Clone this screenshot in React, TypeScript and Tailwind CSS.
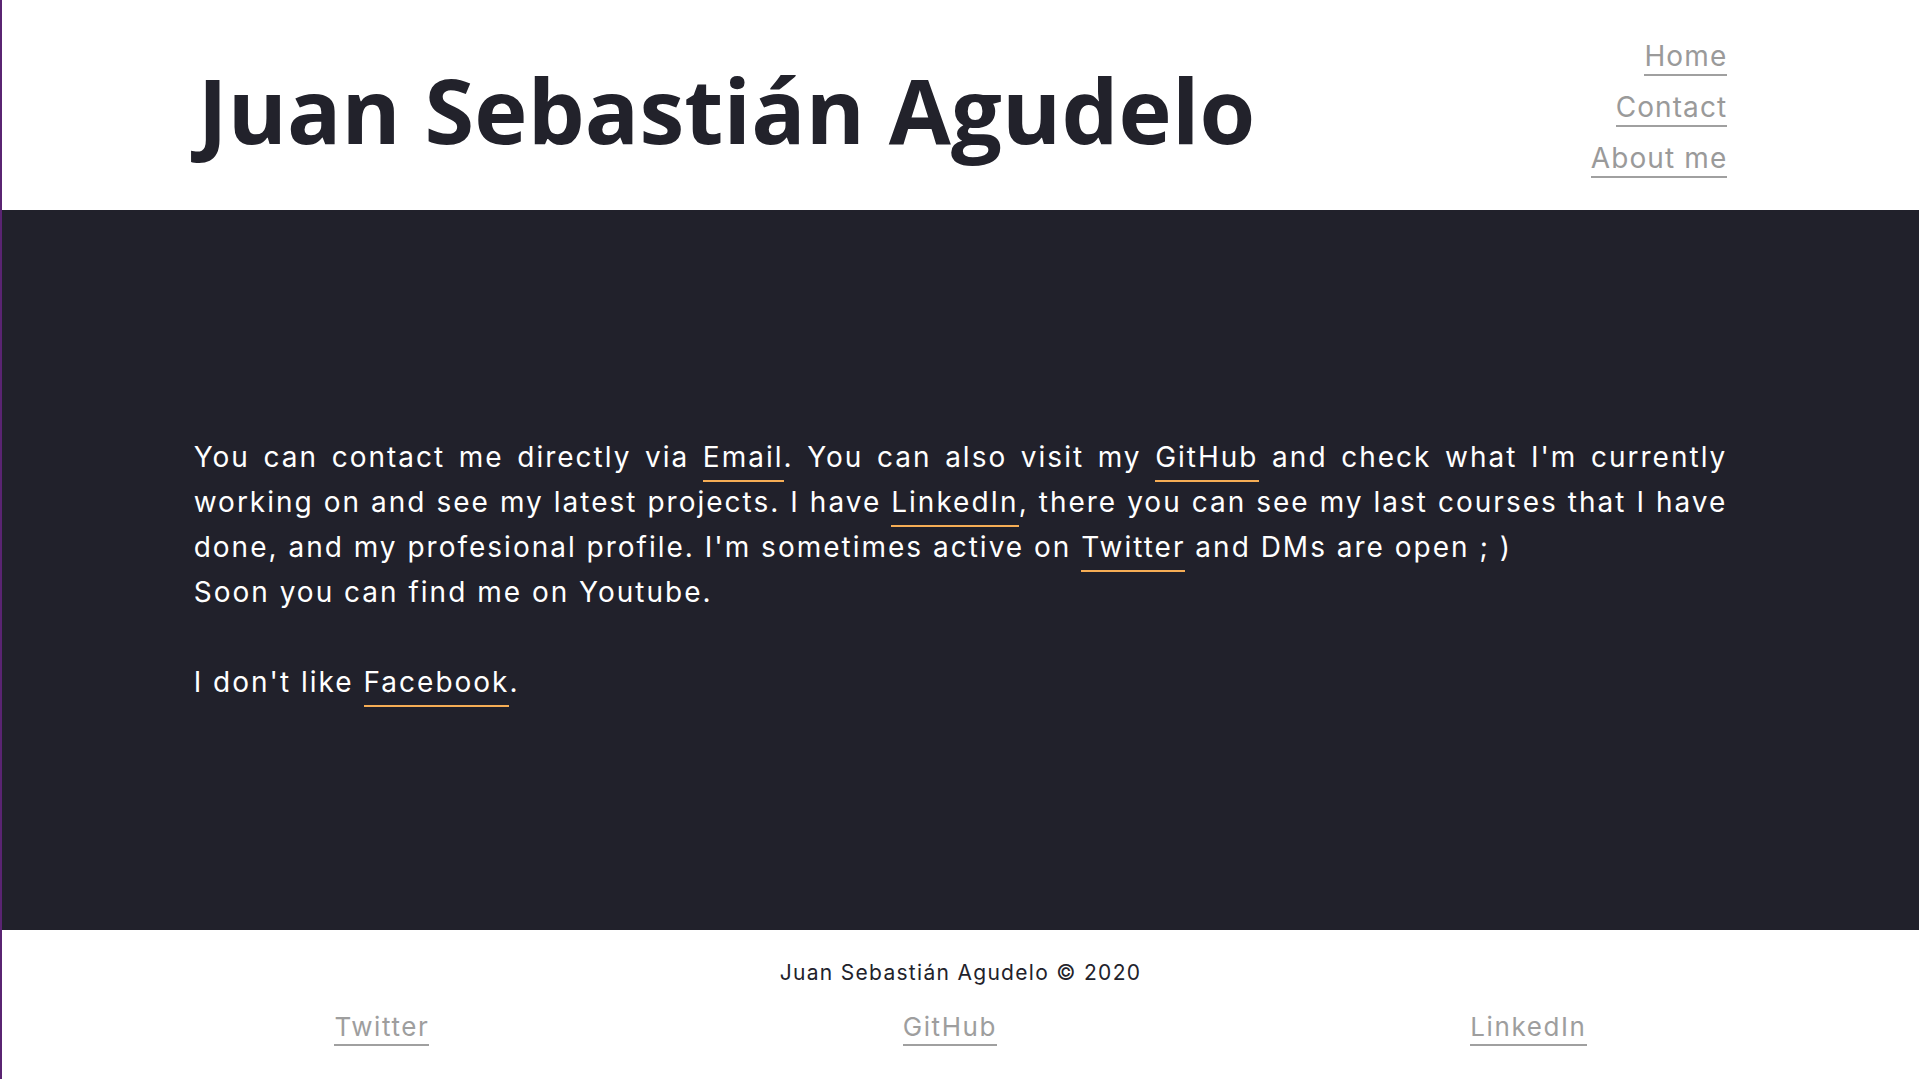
import React from "react";

const body = { fontFamily: '"Inter", "Open Sans", sans-serif' };

function BodyLink({ children }: { children: React.ReactNode }) {
  return (
    <a href="#" className="text-white border-b-2 border-[#f6ad55] pb-[6px] no-underline">
      {children}
    </a>
  );
}

export default function App() {
  return (
    <div className="min-h-screen w-full border-l-2 border-[#5a2472] bg-white" style={body}>
      <header className="h-[210px] flex items-center justify-between px-[10%] bg-white">
        <h1
          className="text-[90px] leading-none font-bold text-[#22222b] tracking-[0.2px] pt-[8px] pl-[4px]"
          style={{ fontFamily: '"Open Sans", "Noto Sans", sans-serif' }}
        >
          Juan Sebastián Agudelo
        </h1>
        <nav className="flex flex-col items-end gap-[13px] pt-[6px] font-normal text-[28px] leading-[36px] tracking-[1.1px] text-[#9a9a9a]">
          <a href="#" className="border-b-2 border-[#a0a0a0]">Home</a>
          <a href="#" className="border-b-2 border-[#a0a0a0]">Contact</a>
          <a href="#" className="border-b-2 border-[#a0a0a0]">About me</a>
        </nav>
      </header>
      <main className="h-[720px] bg-[#21212b] flex items-center px-[10%]">
        <div className="w-full text-white font-normal text-[28px] leading-[45px] tracking-[2px]">
          <span className="block text-justify [text-align-last:justify]">
            You can contact me directly via <BodyLink>Email</BodyLink>. You can also visit my <BodyLink>GitHub</BodyLink> and check what I'm currently
          </span>
          <span className="block text-justify [text-align-last:justify]">
            working on and see my latest projects. I have <BodyLink>LinkedIn</BodyLink>, there you can see my last courses that I have
          </span>
          <span className="block">
            done, and my profesional profile. I'm sometimes active on <BodyLink>Twitter</BodyLink> and DMs are open ; )
          </span>
          <span className="block">Soon you can find me on Youtube.</span>
          <span className="block h-[45px]" />
          <span className="block">
            I don't like <BodyLink>Facebook</BodyLink>.
          </span>
        </div>
      </main>
      <footer className="h-[149px] bg-white flex flex-col items-center pt-[28px]">
        <p className="text-[21px] leading-[30px] tracking-[1.3px] text-[#22222b] font-normal">Juan Sebastián Agudelo © 2020</p>
        <div className="w-full flex justify-around px-[5%] mt-[22px] text-[26px] leading-[34px] tracking-[1.6px] text-[#9e9e9e] font-normal">
          <a href="#" className="border-b-2 border-[#a0a0a0]">Twitter</a>
          <a href="#" className="border-b-2 border-[#a0a0a0]">GitHub</a>
          <a href="#" className="border-b-2 border-[#a0a0a0]">LinkedIn</a>
        </div>
      </footer>
    </div>
  );
}
